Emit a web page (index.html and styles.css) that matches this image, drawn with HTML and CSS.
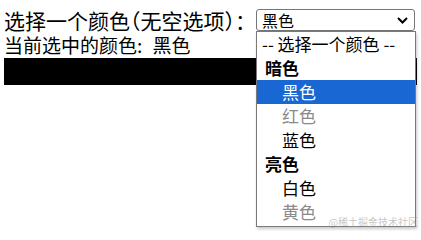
FILE: index.html
```html
<!DOCTYPE html>
<html lang="zh-CN">
<head>
<meta charset="utf-8">
<title>颜色选择</title>
<link rel="stylesheet" href="styles.css">
</head>
<body>
<div class="page">
  <div class="field-row">
    <span class="label">选择一个颜色<span class="halt">（</span>无空选项<span class="halt">）</span>：</span>
    <div class="select-wrap">
      <div class="select">
        <span class="select-value">黑色</span>
        <svg class="chevron" width="11" height="7" viewBox="0 0 11 7"><path d="M1 1 L5.5 5.5 L10 1" fill="none" stroke="#000" stroke-width="2"/></svg>
      </div>
      <div class="listbox">
        <div class="opt">-- 选择一个颜色 --</div>
        <div class="group">暗色</div>
        <div class="opt sub selected">黑色</div>
        <div class="opt sub disabled">红色</div>
        <div class="opt sub">蓝色</div>
        <div class="group">亮色</div>
        <div class="opt sub">白色</div>
        <div class="opt sub disabled">黄色</div>
      </div>
    </div>
  </div>
  <div class="current">当前选中的颜色: <span class="current-value">黑色</span></div>
  <div class="swatch"></div>
</div>
<div class="watermark">@稀土掘金技术社区</div>
</body>
</html>
```
FILE: styles.css
```css
html, body {
  margin: 0;
  padding: 0;
  background: #fff;
}
body {
  font-family: "Noto Sans CJK SC", sans-serif;
  color: #000;
  width: 421px;
  height: 231px;
  overflow: hidden;
  position: relative;
}
.page {
  padding: 9px 4px 0 4px;
}
.field-row {
  display: flex;
  align-items: center;
  height: 22px;
}
.label {
  font-size: 21px;
  line-height: 22px;
  white-space: nowrap;
}
.halt {
  font-feature-settings: "halt" 1;
}
.select-wrap {
  position: relative;
}
.select {
  box-sizing: border-box;
  width: 159px;
  height: 22px;
  border: 1px solid #767676;
  border-radius: 3px;
  display: flex;
  align-items: center;
  justify-content: space-between;
  padding: 0 6px 0 5px;
  font-size: 16px;
  line-height: 20px;
}
.chevron {
  display: block;
}
.listbox {
  position: absolute;
  top: 22px;
  left: 0;
  box-sizing: border-box;
  width: 160px;
  border: 1px solid #7a7a7a;
  background: #fff;
  padding-bottom: 2px;
  box-shadow: 1px 2px 3px rgba(0, 0, 0, 0.22);
  font-size: 17px;
}
.opt, .group {
  height: 24px;
  line-height: 24px;
  padding-left: 5px;
  white-space: nowrap;
}
.group {
  font-weight: bold;
  padding-left: 8px;
}
.opt.sub {
  padding-left: 25px;
}
.opt.selected {
  background: #1967d2;
  color: #fff;
}
.opt.disabled {
  color: #8a8a8a;
}
.current {
  font-size: 19px;
  line-height: 27px;
  white-space: nowrap;
}
.current-value {
  margin-left: 6px;
}
.swatch {
  height: 27px;
  background: #000;
}
.watermark {
  position: absolute;
  right: 3px;
  bottom: 3px;
  font-size: 10px;
  line-height: 12px;
  color: rgba(150, 150, 150, 0.55);
  white-space: nowrap;
}
```
